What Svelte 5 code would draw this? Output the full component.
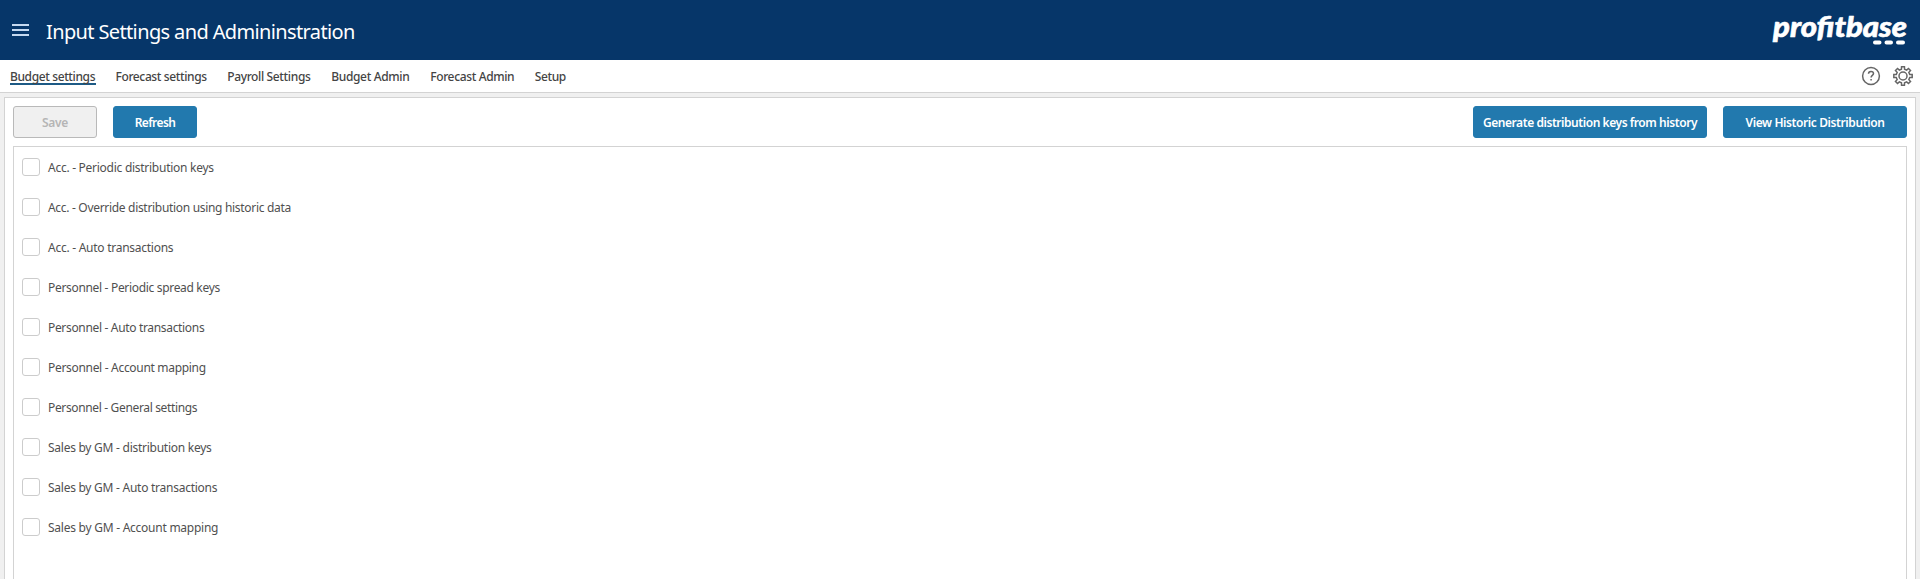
<script>
  const tabs = [
    { label: 'Budget settings', width: 85.5, spacing: -0.38 },
    { label: 'Forecast settings', width: 91.7, spacing: -0.38 },
    { label: 'Payroll Settings', width: 84, spacing: -0.36 },
    { label: 'Budget Admin', width: 79, spacing: -0.34 },
    { label: 'Forecast Admin', width: 84.5, spacing: -0.36 },
    { label: 'Setup', width: 32, spacing: -0.36 }
  ];
  const settings = [
    { label: 'Acc. - Periodic distribution keys', spacing: -0.27 },
    { label: 'Acc. - Override distribution using historic data', spacing: -0.31 },
    { label: 'Acc. - Auto transactions', spacing: -0.26 },
    { label: 'Personnel - Periodic spread keys', spacing: -0.32 },
    { label: 'Personnel - Auto transactions', spacing: -0.33 },
    { label: 'Personnel - Account mapping', spacing: -0.31 },
    { label: 'Personnel - General settings', spacing: -0.35 },
    { label: 'Sales by GM - distribution keys', spacing: -0.26 },
    { label: 'Sales by GM - Auto transactions', spacing: -0.26 },
    { label: 'Sales by GM - Account mapping', spacing: -0.25 }
  ];
  // Outline of an eight-toothed cog, four points per tooth.
  const cog = Array.from({ length: 8 }, (_, i) => {
    const at = (deg, r) => {
      const a = ((i * 45 + deg) * Math.PI) / 180;
      return `${(10 + r * Math.cos(a)).toFixed(2)},${(10 + r * Math.sin(a)).toFixed(2)}`;
    };
    return [at(-13, 6.9), at(-9, 9.3), at(9, 9.3), at(13, 6.9)].join(' ');
  }).join(' ');
</script>

<div class="app">
  <header>
    <button class="menu" aria-label="Menu"><i></i><i></i><i></i></button>
    <h1>Input Settings and Admininstration</h1>
    <svg class="logo" width="140" height="48" viewBox="0 0 140 48" role="img" aria-label="profitbase">
      <text x="2" y="30.500" textLength="134" lengthAdjust="spacingAndGlyphs">profitbase</text>
      <path d="M104 36.400h4.500M115.500 36.400h4.500M127 36.400h5" />
    </svg>
  </header>

  <nav>
    {#each tabs as tab, i}
      <a class:active={i === 0} style="width:{tab.width}px;letter-spacing:{tab.spacing}px">{tab.label}</a>
    {/each}
    <div class="tools">
      <svg width="20" height="20" viewBox="0 0 20 20">
        <circle cx="10" cy="10" r="8.400" />
        <path d="M7.500 7.800C7.500 6.300 8.500 5.400 10 5.400s2.500.9 2.500 2.200c0 1.800-2.400 1.900-2.400 4" />
        <path d="M10.100 13v1.600" />
      </svg>
      <svg class="cog" width="20" height="20" viewBox="0 0 20 20">
        <polygon points={cog} />
        <circle cx="10" cy="10" r="4" />
      </svg>
    </div>
  </nav>

  <main>
    <section class="panel">
      <div class="toolbar">
        <button class="btn save" disabled>Save</button>
        <button class="btn refresh">Refresh</button>
        <button class="btn generate">Generate distribution keys from history</button>
        <button class="btn view">View Historic Distribution</button>
      </div>
      <ul>
        {#each settings as item}
          <li><span class="box"></span><span class="label" style="letter-spacing:{item.spacing}px">{item.label}</span></li>
        {/each}
      </ul>
    </section>
  </main>
</div>

<style>
  :global(body) { margin: 0; overflow: hidden; }
  .app {
    display: flex; flex-direction: column; height: 579px; overflow: hidden;
    background: #f0f0f0; font: 12px/16px "Noto Sans", sans-serif; color: #505050;
  }
  header {
    display: flex; align-items: center; height: 60px; flex: none; box-sizing: border-box;
    padding: 0 9px 0 11px; background: #063669; color: #fff;
  }
  .menu {
    display: flex; flex-direction: column; gap: 3px; width: 18px; padding: 0 0 0 1px; border: 0;
    background: none; height: 12px; box-sizing: border-box;
  }
  .menu i { height: 2px; background: #c5d9f0; }
  h1 { margin: 4px 0 0 17px; font-size: 20px; line-height: 28px; font-weight: 400; letter-spacing: -0.63px; white-space: nowrap; }
  .logo { margin-left: auto; overflow: visible; }
  .logo text { font: italic 900 27.5px Lato, sans-serif; fill: #fff; stroke: #fff; stroke-width: .6; stroke-linejoin: round; }
  .logo path { stroke: #fff; stroke-width: 4; stroke-linecap: round; }
  nav {
    display: flex; align-items: center; gap: 20px; flex: none; height: 33px; box-sizing: border-box;
    padding: 0 7px 0 10px; background: #fff; border-bottom: 1px solid #d3d3d3;
  }
  nav a { height: 17px; padding-top: 1px; line-height: 16px; font-weight: 500; white-space: nowrap; box-sizing: border-box; color: #444; }
  nav a.active { border-bottom: 2px solid #1d5a85; }
  .tools { display: flex; gap: 12px; margin-left: auto; }
  .tools svg { fill: none; stroke: #666; stroke-width: 1.500; }
  main { flex: 1; padding: 4px 4px 0; min-height: 0; }
  .panel {
    height: 100%; box-sizing: border-box; display: flex; flex-direction: column;
    padding: 8px 8px 0; background: #fff; border: 1px solid #d3d3d3; border-bottom: 0;
  }
  .toolbar { display: flex; gap: 16px; flex: none; }
  .btn {
    height: 32px; box-sizing: border-box; padding: 2px 0 0; border: 1px solid #2279ae; border-radius: 3px;
    background: #2279ae; color: #fff; font: 600 12px/16px "Noto Sans", sans-serif; white-space: nowrap;
  }
  .save { width: 84px; background: #f0f0f0; border-color: #b9b9b9; color: #b5b5b5; letter-spacing: -0.3px; }
  .refresh { width: 84px; letter-spacing: -0.6px; }
  .generate { width: 234px; margin-left: auto; letter-spacing: -0.44px; }
  .view { width: 184px; letter-spacing: -0.4px; }
  ul { flex: 1; margin: 8px 0 0; padding: 0 0 0 8px; list-style: none; border: 1px solid #d3d3d3; border-bottom: 0; }
  li { display: flex; align-items: center; height: 40px; gap: 8px; }
  .box { width: 18px; height: 18px; box-sizing: border-box; border: 1px solid #ccc; border-radius: 3px; }
  .label { padding-top: 2px; white-space: nowrap; }
</style>
